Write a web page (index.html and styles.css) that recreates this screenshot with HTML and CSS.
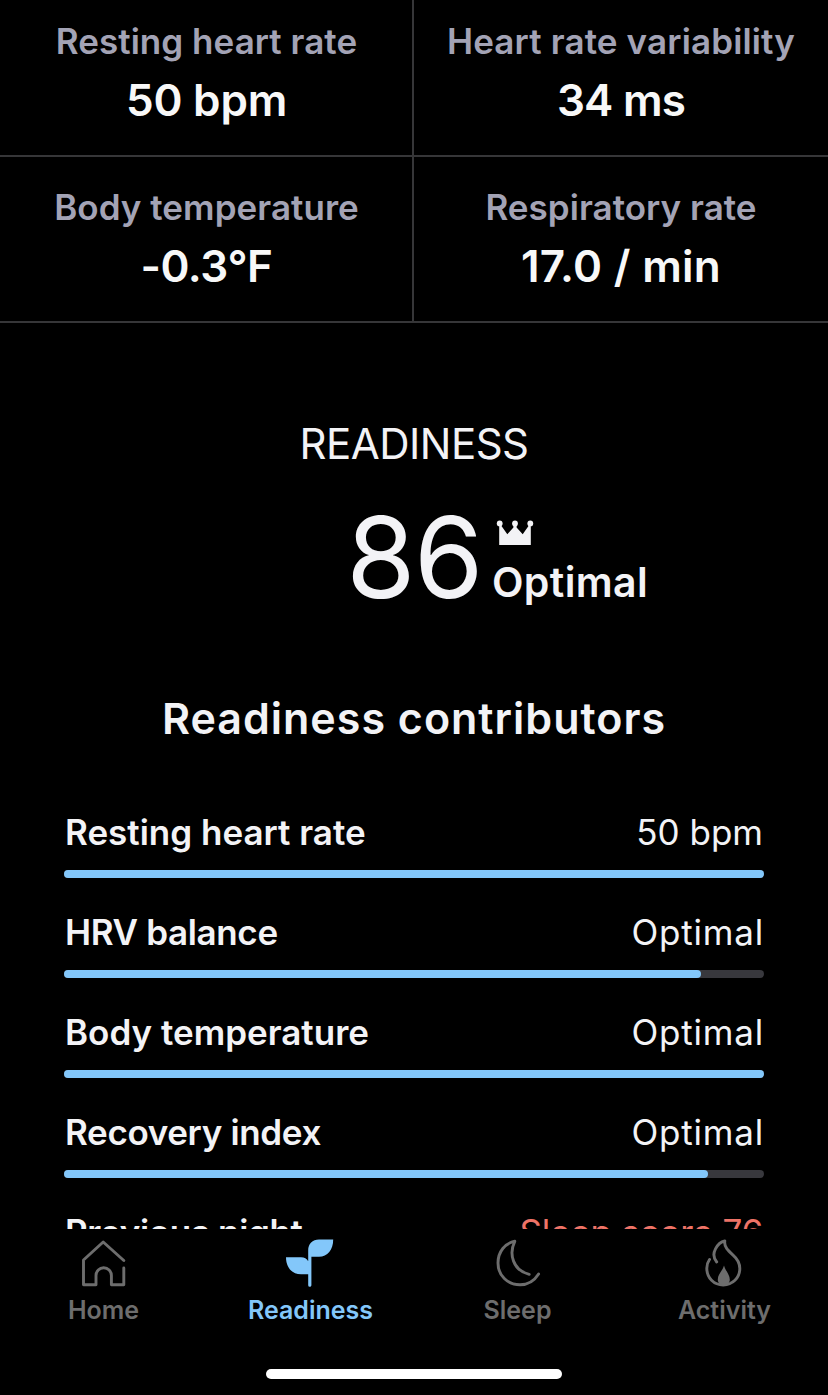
FILE: index.html
```
<!DOCTYPE html>
<html lang="en">
<head>
    <meta charset="UTF-8">
    <meta name="viewport" content="width=device-width, initial-scale=1.0">
    <title>Readiness</title>
    <link rel="stylesheet" href="styles.css">
</head>
<body>
    <div class="screen">
        <main class="content">
            <!-- Vitals -->
            <section class="vitals">
                <div class="vital">
                    <div class="vital-label">Resting heart rate</div>
                    <div class="vital-value">50 bpm</div>
                </div>
                <div class="vital">
                    <div class="vital-label variability">Heart rate variability</div>
                    <div class="vital-value ms">34 ms</div>
                </div>
                <div class="vital">
                    <div class="vital-label">Body temperature</div>
                    <div class="vital-value degrees">-0.3°F</div>
                </div>
                <div class="vital">
                    <div class="vital-label">Respiratory rate</div>
                    <div class="vital-value per-min">17.0 / min</div>
                </div>
            </section>

            <!-- Score -->
            <section class="readiness">
                <div class="readiness-title">READINESS</div>
                <div class="score-row">
                    <div class="score">86</div>
                    <div class="status">
                        <svg class="crown" viewBox="0 0 38 26">
                            <circle cx="3.7" cy="3.4" r="2.9"/>
                            <circle cx="19" cy="3.4" r="2.9"/>
                            <circle cx="34.3" cy="3.4" r="2.9"/>
                            <path d="M3.2 4L4.8 5L11.3 14.3L17.4 7.5V4H20.6V7.5L26.7 14.3L33.2 5L34.8 4V25H3.2Z"/>
                        </svg>
                        <span class="status-text">Optimal</span>
                    </div>
                </div>
            </section>

            <!-- Contributors -->
            <section class="contributors">
                <h2>Readiness contributors</h2>
                <div class="contributor">
                    <div class="row"><span class="name">Resting heart rate</span><span class="value bpm">50 bpm</span></div>
                    <div class="track"><div class="fill" style="width: 100%"></div></div>
                </div>
                <div class="contributor">
                    <div class="row"><span class="name tight">HRV balance</span><span class="value">Optimal</span></div>
                    <div class="track"><div class="fill" style="width: 91%"></div></div>
                </div>
                <div class="contributor">
                    <div class="row"><span class="name">Body temperature</span><span class="value">Optimal</span></div>
                    <div class="track"><div class="fill" style="width: 100%"></div></div>
                </div>
                <div class="contributor">
                    <div class="row"><span class="name tight">Recovery index</span><span class="value">Optimal</span></div>
                    <div class="track"><div class="fill" style="width: 92%"></div></div>
                </div>
                <div class="contributor">
                    <div class="row"><span class="name tight">Previous night</span><span class="value low">Sleep score 76</span></div>
                </div>
            </section>
        </main>

        <!-- Tab bar -->
        <nav class="tabs">
            <a class="tab">
                <svg class="icon" viewBox="0 0 48 48">
                    <path d="M44.8 21.5L24.2 3L4.5 21V45.8H17V36.5A7.7 7.7 0 0 1 32.4 36.5V45.8H44.8V29"/>
                </svg>
                <span>Home</span>
            </a>
            <a class="tab active">
                <svg class="icon solid" viewBox="0 0 48 48">
                    <path d="M47.2 .4H33C26.5 .4 22.2 5 22.2 11V22.2C20.8 19.8 18.5 18.3 15 18.3H0C0 28.5 6 35.3 15 35.3H22.2V46.2Q22.2 47.8 23.8 47.8T25.4 46.2V17.7H33C41.5 17.7 47.2 10.5 47.2 .4Z"/>
                </svg>
                <span>Readiness</span>
            </a>
            <a class="tab">
                <svg class="icon" viewBox="0 0 48 48">
                    <path d="M45.6 35C41.5 41.5 34.5 45.8 27 45.8C14.5 45.8 5 36.5 5 24C5 12.5 12.3 4 21.8 2.3C15.5 15 20 31.5 36.2 35.3"/>
                </svg>
                <span>Sleep</span>
            </a>
            <a class="tab">
                <svg class="icon" viewBox="0 0 48 48">
                    <path d="M9.5 20.5C7.7 23 6.8 26 6.8 29.2C6.8 39 14 46 23.2 46S39.8 39 39.8 29.5C39.8 23.5 36.8 19.3 32.8 15.8C28 11.5 23.8 7.6 24.8 2C18 3.5 9.5 14.3 16.7 23"/>
                    <path class="ember" d="M24 26.5C25.5 32 29.8 35.5 29.8 40.5C29.8 44 27.5 46 23.8 46S17.8 44 17.8 40.5C17.8 35 22.5 32 24 26.5Z"/>
                </svg>
                <span>Activity</span>
            </a>
        </nav>
        <div class="home-indicator"></div>
    </div>
</body>
</html>
```
FILE: styles.css
```
* {
    margin: 0;
    padding: 0;
    box-sizing: border-box;
}

body {
    font-family: Inter, "Liberation Sans", sans-serif;
    background: #000000;
    color: #f3f3f6;
}

.screen {
    width: 828px;
    height: 1395px;
    overflow: hidden;
    display: flex;
    flex-direction: column;
}

/* Scrolled content, cut off by the tab bar */
.content {
    height: 1229px;
    flex-shrink: 0;
    overflow: hidden;
}

/* Vitals */
.vitals {
    display: grid;
    grid-template-columns: 414px 414px;
    grid-auto-rows: 166px;
    margin-top: -9px;
}

.vital {
    display: flex;
    flex-direction: column;
    align-items: center;
    padding-top: 30px;
    border-bottom: 2px solid #363638;
    white-space: nowrap;
}

.vital:nth-child(odd) {
    border-right: 2px solid #363638;
    padding-left: 1px;
}

.vital-label {
    font-size: 35px;
    line-height: 40px;
    font-weight: 600;
    letter-spacing: 0.04px;
    color: #a3a3b5;
}

.vital-label.variability {
    letter-spacing: 0.14px;
}

.vital-value {
    font-size: 44px;
    line-height: 60px;
    margin-top: 9px;
    font-weight: 600;
    letter-spacing: -0.2px;
    color: #f8f8f8;
}

.vital-value.ms {
    letter-spacing: -0.8px;
}

.vital-value.degrees {
    letter-spacing: -0.5px;
}

.vital-value.per-min {
    letter-spacing: 0.3px;
}

/* Score */
.readiness-title {
    margin-top: 96px;
    font-size: 42px;
    line-height: 50px;
    letter-spacing: -0.5px;
    text-align: center;
}

.score-row {
    display: grid;
    grid-template-columns: 1fr auto 1fr;
    margin-top: 32px;
}

.score {
    grid-column: 2;
    font-size: 112px;
    line-height: 112px;
    letter-spacing: -1.5px;
}

.status {
    display: flex;
    flex-direction: column;
    padding: 19px 0 0 10px;
}

.crown {
    width: 38px;
    height: 26px;
    margin-left: 4px;
    fill: #f3f3f6;
}

.status-text {
    margin-top: 11px;
    font-size: 41px;
    line-height: 50px;
    font-weight: 600;
    letter-spacing: 0.4px;
}

/* Contributors */
.contributors {
    padding: 0 64px;
    margin-top: 80px;
}

.contributors h2 {
    font-size: 43px;
    line-height: 50px;
    font-weight: 600;
    letter-spacing: 1px;
    text-align: center;
    margin-bottom: 69px;
}

.contributor {
    height: 100px;
}

.row {
    display: flex;
    justify-content: space-between;
    font-size: 35px;
    line-height: 40px;
}

.name {
    padding-left: 1px;
    font-weight: 600;
}

.name.tight {
    letter-spacing: -0.35px;
}

.value {
    letter-spacing: 0.8px;
}

.value.bpm {
    letter-spacing: 0;
    padding-right: 1px;
}

.value.low {
    letter-spacing: -0.2px;
    padding-right: 1px;
    color: #ee7367;
}

.track {
    height: 8px;
    margin-top: 18px;
    border-radius: 4px;
    background: #38383d;
}

.fill {
    height: 8px;
    border-radius: 4px;
    background: #83c7fa;
}

/* Tab bar */
.tabs {
    display: grid;
    grid-template-columns: repeat(4, 1fr);
    padding-top: 10px;
    color: #6d6d6d;
}

.tab {
    display: flex;
    flex-direction: column;
    align-items: center;
    font-size: 25px;
    line-height: 30px;
    font-weight: 600;
}

.tab.active {
    color: #83c7fa;
}

.icon {
    width: 48px;
    height: 48px;
    margin: 0 1px 8px 0;
    fill: none;
    stroke: currentColor;
    stroke-width: 2.9;
    stroke-linecap: round;
    stroke-linejoin: round;
}

.icon.solid {
    fill: currentColor;
    stroke: none;
}

.ember {
    fill: currentColor;
    stroke: none;
}

.home-indicator {
    width: 296px;
    height: 10px;
    margin: 44px auto 0;
    border-radius: 5px;
    background: #ffffff;
}
```
